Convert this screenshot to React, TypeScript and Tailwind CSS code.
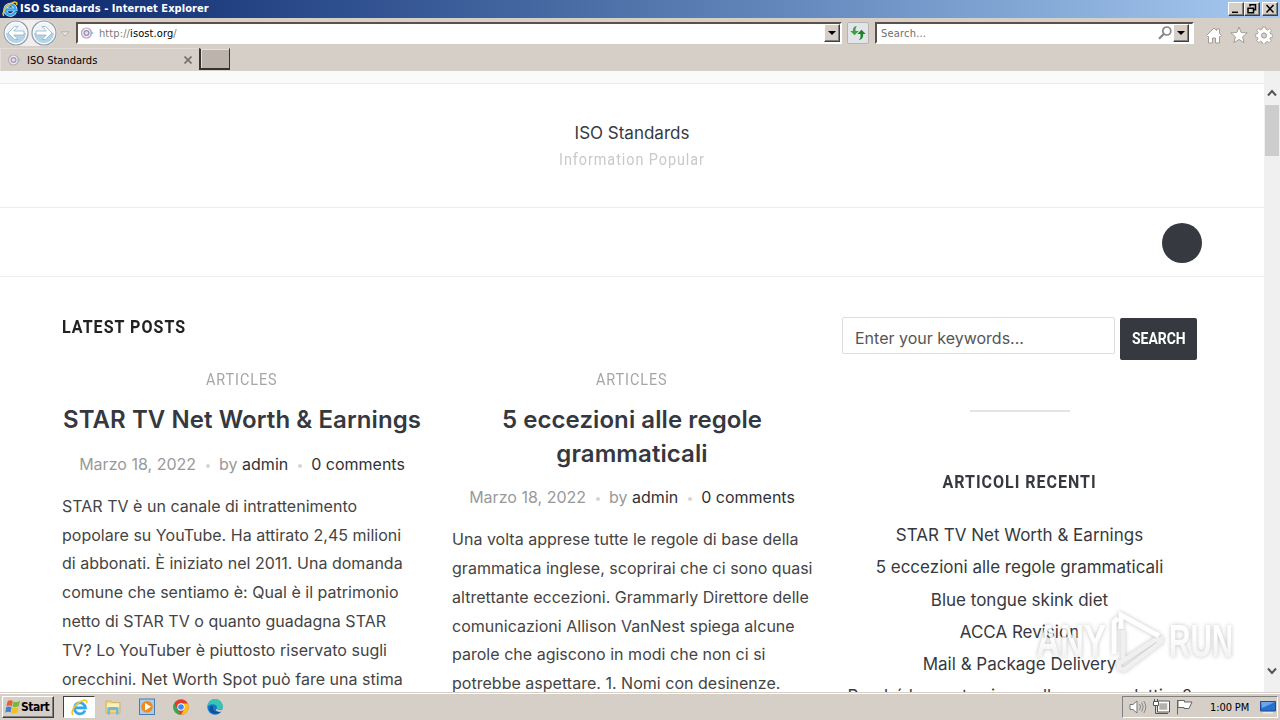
import React from "react";

const BODY_ONE = [
  "STAR TV è un canale di intrattenimento",
  "popolare su YouTube. Ha attirato 2,45 milioni",
  "di abbonati. È iniziato nel 2011. Una domanda",
  "comune che sentiamo è: Qual è il patrimonio",
  "netto di STAR TV o quanto guadagna STAR",
  "TV? Lo YouTuber è piuttosto riservato sugli",
  "orecchini. Net Worth Spot può fare una stima",
];
const BODY_TWO = [
  "Una volta apprese tutte le regole di base della",
  "grammatica inglese, scoprirai che ci sono quasi",
  "altrettante eccezioni. Grammarly Direttore delle",
  "comunicazioni Allison VanNest spiega alcune",
  "parole che agiscono in modi che non ci si",
  "potrebbe aspettare. 1. Nomi con desinenze.",
];
const RECENT = [
  "STAR TV Net Worth & Earnings",
  "5 eccezioni alle regole grammaticali",
  "Blue tongue skink diet",
  "ACCA Revision",
  "Mail & Package Delivery",
  "Perché la mente si usa alle mucose lattine?",
];

function IELogo({ className }: { className: string }) {
  return (
    <svg viewBox="0 0 16 16" className={className}>
      <path d="M13.200 10.800A5.200 5.200 0 1 1 13.600 8.400H4.500" fill="none" stroke="#e4f6ff" strokeWidth="3.600" />
      <path d="M13.200 10.800A5.200 5.200 0 1 1 13.600 8.400H4.500" fill="none" stroke="#37a7e6" strokeWidth="2.500" />
      <path d="M2 14.800C-1 12 4.500 4 10.500 1.600c3.200-1.300 5-.2 4.100 2.400" fill="none" stroke="#f3c62e" strokeWidth="1.500" />
    </svg>
  );
}

function Favicon({ className }: { className: string }) {
  return (
    <svg viewBox="0 0 14 14" className={className}>
      <circle cx="6.500" cy="7" r="5" fill="#f4f0f6" stroke="#b4a2bb" strokeWidth="1.200" />
      <circle cx="6.500" cy="7" r="2.400" fill="#e6dcea" stroke="#9c88b4" strokeWidth="1.200" />
      <path d="M10.500 5.200 14 7l-3.500 1.800z" fill="#7cc3dd" />
    </svg>
  );
}

function NavCircle({ flip }: { flip?: boolean }) {
  return (
    <svg viewBox="0 0 26 26" className="size-[26px]">
      <circle cx="13" cy="13" r="12" fill="#eef3f7" stroke="#8f9ca8" strokeWidth="1.200" />
      <path d="M2.500 13a10.500 10.500 0 0 0 21 0z" fill="#b4d3e6" />
      <circle cx="13" cy="13" r="10.600" fill="none" stroke="#fff" strokeWidth="1" />
      <path
        d={flip ? "M21 13 14.500 6.500h-3.500l4.300 4.500H5v4h10.300L11 19.500h3.500z" : "M5 13 11.500 6.500H15L10.700 11H21v4H10.700L15 19.500h-3.500z"}
        fill="#fff"
        stroke="#8fb2cb"
        strokeWidth="0.800"
      />
    </svg>
  );
}

const BEVEL = "border border-t-white border-l-white border-r-[#404040] border-b-[#404040] bg-[#d6cfc8] shadow-[inset_-1px_-1px_0_#808080]";

function DropButton() {
  return (
    <div className={`${BEVEL} flex h-[18px] w-4 shrink-0 items-center justify-center`}>
      <svg viewBox="0 0 8 4" className="h-1 w-2">
        <path d="M0 0h8L4 4z" fill="#000" />
      </svg>
    </div>
  );
}

function CaptionButton({ d }: { d: string }) {
  return (
    <div className={`${BEVEL} h-[14px] w-4`}>
      <svg viewBox="0 0 14 12" className="h-3 w-3.5">
        <path d={d} fill="none" stroke="#000" strokeWidth="1.500" />
      </svg>
    </div>
  );
}

function TitleBar() {
  return (
    <div className="flex h-[18px] items-center bg-linear-to-r from-[#0a246a] to-[#a6caf0] pr-0.5 pl-0.5">
      <IELogo className="size-4" />
      <span className="ml-[2px] text-[11px] leading-[18px] font-bold tracking-[0.060px] whitespace-nowrap text-white">ISO Standards - Internet Explorer</span>
      <div className="ml-auto flex">
        <CaptionButton d="M3 9.300h6" />
        <CaptionButton d="M5 3.500V1.700h5.500v5H9M3 5.200h5.500v4.500H3z" />
        <div className="w-0.5" />
        <CaptionButton d="m3.500 2 7 7.500m0-7.500-7 7.500" />
      </div>
    </div>
  );
}

function AddressRow() {
  return (
    <div className="flex h-[30px] items-start bg-[#d6cfc8]">
      <div className="mt-[2px] ml-[3px] flex gap-[2px] rounded-full bg-[#f1efed]">
        <NavCircle />
        <NavCircle flip />
      </div>
      <svg viewBox="0 0 10 6" className="mt-[13px] ml-[3px] h-1.5 w-2.5">
        <path d="M1 .8h8L5 5z" fill="#e8e4e0" stroke="#b3aea7" strokeWidth="0.900" />
      </svg>
      <div className="mt-1 ml-[6px] flex h-[22px] w-[766px] items-center border-2 border-t-[#5b5148] border-r-white border-b-white border-l-[#5b5148] bg-white pl-0.5">
        <Favicon className="size-3.5" />
        <span className="mt-[2px] ml-[5px] text-[11px] tracking-[0.100px] text-[#7b7b7b]">
          http://<span className="text-black">isost.org</span>/
        </span>
        <div className="ml-auto">
          <DropButton />
        </div>
      </div>
      <div className="mt-1 ml-[5px] flex size-[22px] items-center justify-center rounded-[2px] border border-[#b7b4b2] bg-[#e1e5e7]">
        <svg viewBox="0 0 16 14" className="h-3.5 w-4">
          <path d="M6.800 0C3.800.2 2.800 2.500 3 5H.3L4.500 9.300 8.700 5H5.600C5.400 3 5.600 1.500 6.800 0z" fill="#3c9f41" />
          <path d="M8.800 14c3.500-.5 4.600-2.600 4.300-6h2.600L11.500 3.700 7.300 8h3.200c.3 2.500 0 4.500-1.700 6z" fill="#1c8427" />
        </svg>
      </div>
      <div className="mt-1 ml-[6px] flex h-[22px] w-[319px] items-center border-2 border-t-[#5b5148] border-r-white border-b-white border-l-[#5b5148] bg-white pl-[4px]">
        <span className="mt-[2px] text-[11px] tracking-[0.200px] text-[#6e6e6e]">Search...</span>
        <svg viewBox="0 0 14 14" className="ml-auto size-3.5">
          <circle cx="8.800" cy="5" r="4" fill="none" stroke="#858585" strokeWidth="1.700" />
          <path d="M5.800 8 1 12.800" stroke="#858585" strokeWidth="2.200" />
        </svg>
        <div className="mr-[3px] ml-[1px]">
          <DropButton />
        </div>
      </div>
      <div className="mt-2 ml-[11px] flex gap-[7px]">
        <svg viewBox="0 0 18 18" className="size-[18px]">
          <path d="M1.500 9.500 9 2l2.500 2.500V3h3v4.500l2 2-1 1h-1V17h-4v-5h-3v5h-4v-6.500h-1z" fill="#fff" stroke="#a19c97" />
        </svg>
        <svg viewBox="0 0 18 18" className="size-[18px]">
          <path d="m9 1 2.200 5.500 6 .4-4.600 3.900 1.500 5.900L9 13.500l-5.100 3.200 1.500-5.900L.8 6.900l6-.4z" fill="#fff" stroke="#a19c97" />
        </svg>
        <svg viewBox="0 0 18 18" className="size-[18px]">
          <path d="M7.500 1h3l.3 2.200 1.700.8 1.900-1.300 2 2L15.100 6.500l.7 1.600 2 .4v2.500l-2.200.4-.7 1.500 1.300 1.800-2 2-1.800-1.300-1.600.7-.3 1.900h-3l-.4-2-1.600-.7-1.800 1.300-2-2L3 12.800l-.7-1.500-2-.4V8.300l2-.4L3 6.400 1.700 4.600l2-2L5.500 3.900l1.600-.7z" fill="#fff" stroke="#a19c97" strokeWidth="0.900" />
          <circle cx="9" cy="9.500" r="2.600" fill="#d6cfc8" stroke="#a19c97" />
        </svg>
      </div>
    </div>
  );
}

function TabRow() {
  return (
    <div className="flex h-[23px] items-start bg-[#d6cfc8]">
      <div className="flex h-[23px] w-[198px] items-center border-t border-l border-[#e2ddd8] pl-[6px]">
        <Favicon className="size-3.5 opacity-80" />
        <span className="mt-[2px] ml-[6px] text-[11px] text-black">ISO Standards</span>
        <svg viewBox="0 0 8 8" className="mr-[6px] ml-auto size-2">
          <path d="m.5.5 7 7m0-7-7 7" stroke="#77716b" strokeWidth="1.700" />
        </svg>
      </div>
      <div className="ml-px h-[22px] w-[31px] border-t border-r border-b-2 border-l-2 border-t-[#d6cfc8] border-r-[#37322e] border-b-[#37322e] border-l-[#37322e] bg-[#bcb3ad] shadow-[inset_1px_1px_0_#e5e0dc]" />
    </div>
  );
}

function Meta() {
  return (
    <div className="flex h-[34px] items-center justify-center text-base leading-[34px] whitespace-nowrap text-[#999]">
      <span className="tracking-[0.020px]">Marzo 18, 2022</span>
      <span className="mt-1 mr-[9px] ml-[10px] size-1 rounded-full bg-[#d5d5d5]" />
      <span>
        by <span className="text-[#2f3238]">admin</span>
      </span>
      <span className="mt-1 mr-[9px] ml-[10px] size-1 rounded-full bg-[#d5d5d5]" />
      <span className="text-[#2f3238]">0 comments</span>
    </div>
  );
}

function Post({ title, body }: { title: string[]; body: string[] }) {
  return (
    <article className="w-[360px]">
      <div className="flex h-6 justify-center">
        <span className="origin-center scale-x-[0.900] font-[Roboto] text-base leading-6 tracking-[1.050px] text-[#a5a5a5]">ARTICLES</span>
      </div>
      <h2 className="mt-[11.400px] text-center text-[24px] leading-[33.300px] font-semibold tracking-[0.080px] whitespace-nowrap text-[#35383f]">
        {title.map((t) => (
          <div key={t}>{t}</div>
        ))}
      </h2>
      <div className="mt-[10px]">
        <Meta />
      </div>
      <div className="mt-[11.200px] text-base leading-[28.800px] tracking-[0.020px] whitespace-nowrap text-[#444]">
        {body.map((t) => (
          <div key={t}>{t}</div>
        ))}
      </div>
    </article>
  );
}

function Sidebar() {
  return (
    <aside className="ml-[30px] flex w-[355px] flex-col items-center pt-[40px]">
      <div className="flex w-full">
        <div className="h-[37px] w-[273px] rounded-[2px] border border-[#ddd] pl-[12px] text-base leading-[41px] text-[#555]">Enter your keywords...</div>
        <div className="mt-px ml-[5px] flex h-[42px] w-[77px] items-center justify-center rounded-[2px] bg-[#363940]">
          <span className="origin-center scale-x-[0.870] font-[Roboto] text-base font-bold text-white">SEARCH</span>
        </div>
      </div>
      <div className="mt-[50px] h-0.5 w-[100px] bg-[#e4e4e4]" />
      <h3 className="mt-[58px] origin-center scale-x-[0.890] font-[Roboto] text-lg leading-6 font-bold tracking-[1.100px] whitespace-nowrap text-[#363940]">ARTICOLI RECENTI</h3>
      <div className="mt-[25px] text-center text-[17px] leading-[32.300px] whitespace-nowrap text-[#363940]">
        {RECENT.map((t) => (
          <div key={t}>{t}</div>
        ))}
      </div>
    </aside>
  );
}

function ScrollBar() {
  return (
    <div className="flex h-full w-4 shrink-0 flex-col items-center bg-[#f0f0f0]">
      <svg viewBox="0 0 10 8" className="mt-[18px] h-2 w-2.5">
        <path d="m1 6.500 4-4.500 4 4.500" fill="none" stroke="#555" strokeWidth="2" />
      </svg>
      <div className="mt-2 h-[51px] w-3.5 bg-[#cdcdcd]" />
      <svg viewBox="0 0 10 8" className="mt-auto mb-[17px] h-2 w-2.5">
        <path d="m1 1.500 4 4.500 4-4.500" fill="none" stroke="#555" strokeWidth="2" />
      </svg>
    </div>
  );
}

const MARK_WORD = "inline-block origin-left scale-y-[1.150] bg-linear-to-b from-white from-40% to-[#ececec] bg-clip-text font-['Liberation_Sans'] text-[40px] leading-none font-bold text-transparent";

function Watermark() {
  return (
    <div className="absolute top-[608px] left-[1036px] flex h-[66px] items-center opacity-80 drop-shadow-[0_0_2px_rgba(0,0,0,0.300)]">
      <div className="w-[69px] shrink-0">
        <span className={`${MARK_WORD} scale-x-[0.830]`}>ANY</span>
      </div>
      <svg viewBox="0 0 60 66" className="h-[66px] w-[60px] shrink-0">
        <path d="M16 21V7L54 28M9 46V14l4-4" fill="none" stroke="#fff" strokeWidth="5" />
        <path d="M18 22v31l32-21 6-1v3L19 62l-5-2v-8" fill="none" stroke="#ededed" strokeWidth="4.500" />
      </svg>
      <div className="ml-1 w-[66px] shrink-0">
        <span className={`${MARK_WORD} scale-x-[0.740]`}>RUN</span>
      </div>
    </div>
  );
}

function Page() {
  return (
    <div className="flex h-[621px] overflow-hidden bg-white font-[Inter]">
      <div className="w-[1264px] overflow-hidden">
        <div className="h-[13px] border-b border-[#ececec] bg-[#fafafa]" />
        <header className="flex h-[124px] flex-col items-center border-b border-[#ececec] pt-[37px]">
          <div className="text-[17px] leading-6 text-[#363940]">ISO Standards</div>
          <div className="mt-[3px] origin-center scale-x-[0.900] font-[Roboto] text-base leading-6 tracking-[1.050px] text-[#c9c9c9]">Information Popular</div>
        </header>
        <nav className="flex h-[69px] items-center justify-end border-b border-[#ececec] pt-[2px] pr-[62px]">
          <div className="size-10 rounded-full bg-[#363940]" />
        </nav>
        <main className="flex pl-[62px]">
          <section className="pt-[38px]">
            <h1 className="origin-left scale-x-[0.890] font-[Roboto] text-lg leading-6 font-bold tracking-[1.150px] text-[#222]">LATEST POSTS</h1>
            <div className="mt-[29px] flex gap-[30px]">
              <Post title={["STAR TV Net Worth & Earnings"]} body={BODY_ONE} />
              <Post title={["5 eccezioni alle regole", "grammaticali"]} body={BODY_TWO} />
            </div>
          </section>
          <Sidebar />
        </main>
      </div>
      <ScrollBar />
    </div>
  );
}

function TaskBar() {
  return (
    <div className="flex h-7 items-start border-t border-[#d6cfc8] bg-[#d6cfc8] shadow-[inset_0_1px_0_#fff]">
      <div className={`${BEVEL} mt-[3px] ml-0.5 flex h-[22px] w-[52px] items-center pl-0.5`}>
        <svg viewBox="0 0 16 16" className="h-4 w-4 shrink-0">
          <path d="M2.500 2.500Q5 .5 7.800 2L6.800 7.300Q4 5.800 1.400 7.500z" fill="#e8602c" />
          <path d="M8.500 2.400Q11.500 4 15 1.800L13.800 7Q10.500 9 7.500 7.500z" fill="#74b83e" />
          <path d="M1.200 8.300Q4 6.700 6.600 8.200L5.500 13.500Q3 12 .2 13.800z" fill="#4181d0" />
          <path d="M7.300 8.400q3 1.600 6.400-.4l-1.200 5.500q-3.500 2-6.200.3z" fill="#f4be28" />
        </svg>
        <span className="text-[12px] font-bold tracking-[-0.500px] text-black">Start</span>
      </div>
      <div className="mt-[3px] ml-[9px] flex h-[22px] w-8 items-center justify-center border border-t-[#404040] border-r-white border-b-white border-l-[#404040] bg-white">
        <IELogo className="size-[17px]" />
      </div>
      <svg viewBox="0 0 16 16" className="mt-[6px] ml-2.5 size-4">
        <path d="M1 2h5l1 1.500h8V14H1z" fill="#efd77f" stroke="#c9ab55" strokeWidth="0.700" />
        <path d="M2 4.500h12V8H2z" fill="#fbf0b7" />
        <path d="M2.500 15.500V9.500Q2.500 8 4.500 8h7q2 0 2 1.500v6H11V11H5v4.500z" fill="#70b9dd" />
      </svg>
      <svg viewBox="0 0 18 18" className="mt-[5px] ml-[17px] size-[18px]">
        <rect x="1.500" y="1" width="15" height="15.500" fill="#a9cdeb" stroke="#477eb2" />
        <circle cx="9" cy="8.800" r="5.800" fill="#f08a1c" />
        <path d="M7 5.100v7.400L13 8.800z" fill="#fff" />
      </svg>
      <svg viewBox="0 0 16 16" className="mt-[6px] ml-[17px] size-4">
        <circle cx="8" cy="8" r="7.700" fill="#e33b2e" />
        <path d="M1.200 4.300 5 11l3 4.700A7.700 7.700 0 0 1 1.200 4.300z" fill="#35a853" />
        <path d="M8 4.500h6.900A7.700 7.700 0 0 1 8 15.700L11.300 10z" fill="#fbc116" />
        <circle cx="8" cy="8" r="3.700" fill="#fff" />
        <circle cx="8" cy="8" r="2.800" fill="#4285f4" />
      </svg>
      <svg viewBox="0 0 16 16" className="mt-[6px] ml-[18px] size-4">
        <circle cx="8" cy="8" r="7.700" fill="#1478cf" />
        <path d="M.5 7A7.600 7.600 0 0 1 15.700 8c0 3-4 3.500-6 2 2-3.500-4-7-9.200-3z" fill="#36c5b1" />
        <path d="M6.200 7.500C5 11 8.500 14 13.700 12.800 10 17 2 14 2.500 9.500 3 7 5 6.500 6.200 7.500z" fill="#12509b" />
        <path d="M9.700 10c2 1.500 5 1 6 .2l-1.300 2.300C11 13.500 7.500 11 9.700 10z" fill="#d6cfc8" />
      </svg>
      <div className="mt-[3px] mr-0.5 ml-auto flex h-[22px] w-[156px] items-center border border-t-[#808080] border-r-white border-b-white border-l-[#808080] pl-[6px]">
        <svg viewBox="0 0 18 16" className="h-4 w-[18px]">
          <path d="M1 5.500h3L8 2v12L4 10.500H1z" fill="#fff" stroke="#777" />
          <path d="M10.500 5q2 3 0 6M12.700 3.500q3 4.500 0 9M14.800 2q4 6 0 12" fill="none" stroke="#888" />
        </svg>
        <svg viewBox="0 0 17 16" className="ml-[6px] h-4 w-[17px]">
          <path d="M5 3h10.500v9H5z" fill="#b4b0ac" stroke="#fff" strokeWidth="2.500" />
          <path d="M4.500 2h12v11h-12z" fill="none" stroke="#555" />
          <path d="M7 14.500h8M2.500 6v8.500H7" fill="none" stroke="#555" />
          <path d="M.5 2.500h5v4h-5z" fill="#fff" stroke="#555" />
          <path d="M1.500 0v2.500M4.500 0v2.500" stroke="#555" />
        </svg>
        <svg viewBox="0 0 17 16" className="ml-[6px] h-4 w-[17px]">
          <path d="M1.500 1v14.500M2 1.500h6.500V3h7.500L13 9.500H8V8.500H2z" fill="#fff" stroke="#666" />
        </svg>
        <span className="mt-[2px] ml-[17px] text-[11px] tracking-[-0.100px] whitespace-nowrap text-black">1:00 PM</span>
        <svg viewBox="0 0 16 14" className="mr-px ml-auto h-3.5 w-4">
          <path d="M.5 1.500h15v9.500H.5z" fill="#2670d0" stroke="#204c8d" />
          <path d="M1 2h14L2 8z" fill="#6ba6ec" />
          <path d="M3 12.800h10" stroke="#e9e9e9" strokeWidth="1.500" />
        </svg>
      </div>
    </div>
  );
}

export default function App() {
  return (
    <div className="relative flex h-[720px] w-[1280px] flex-col overflow-hidden bg-white font-['DejaVu_Sans_Condensed','DejaVu_Sans',sans-serif]">
      <TitleBar />
      <AddressRow />
      <TabRow />
      <Page />
      <TaskBar />
      <Watermark />
    </div>
  );
}
